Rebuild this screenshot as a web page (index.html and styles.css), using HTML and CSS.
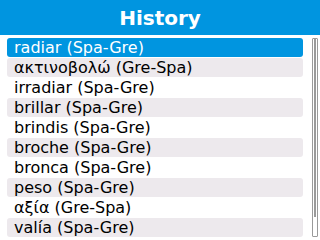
FILE: index.html
```html
<!DOCTYPE html>
<html>
<head>
<meta charset="utf-8">
<link rel="stylesheet" href="styles.css">
</head>
<body>
<div class="header">History</div>
<div class="content">
  <ul class="list">
    <li class="row selected">radiar (Spa-Gre)</li>
    <li class="row alt">ακτινοβολώ (Gre-Spa)</li>
    <li class="row">irradiar (Spa-Gre)</li>
    <li class="row alt">brillar (Spa-Gre)</li>
    <li class="row">brindis (Spa-Gre)</li>
    <li class="row alt">broche (Spa-Gre)</li>
    <li class="row">bronca (Spa-Gre)</li>
    <li class="row alt">peso (Spa-Gre)</li>
    <li class="row">αξία (Gre-Spa)</li>
    <li class="row alt">valía (Spa-Gre)</li>
  </ul>
  <div class="scrollbar"><div class="thumb"></div></div>
</div>
</body>
</html>
```
FILE: styles.css
```css
html, body {
  margin: 0;
  padding: 0;
  background: #ffffff;
  width: 320px;
  height: 240px;
  overflow: hidden;
  font-family: "DejaVu Sans", sans-serif;
}
.header {
  height: 35px;
  background: #0095e0;
  color: #ffffff;
  font-weight: bold;
  font-size: 20px;
  line-height: 36px;
  text-align: center;
}
.content {
  display: flex;
  padding: 3px 2px 0 7px;
  gap: 9px;
}
.list {
  list-style: none;
  margin: 0;
  padding: 0;
  width: 296px;
  display: flex;
  flex-direction: column;
  gap: 1px;
}
.row {
  height: 19px;
  line-height: 19px;
  font-size: 16px;
  padding-left: 7px;
  color: #000000;
  border-radius: 3px;
  white-space: nowrap;
}
.row.alt {
  background: #ede9ed;
}
.row.selected {
  background: #0095e0;
  color: #ffffff;
}
.scrollbar {
  box-sizing: border-box;
  width: 6px;
  height: 199px;
  border: 1px solid #9a9a9a;
  border-radius: 1px;
  padding: 0 1px;
  background: #ffffff;
}
.thumb {
  height: 178px;
  background: #9a9a9a;
}
```
